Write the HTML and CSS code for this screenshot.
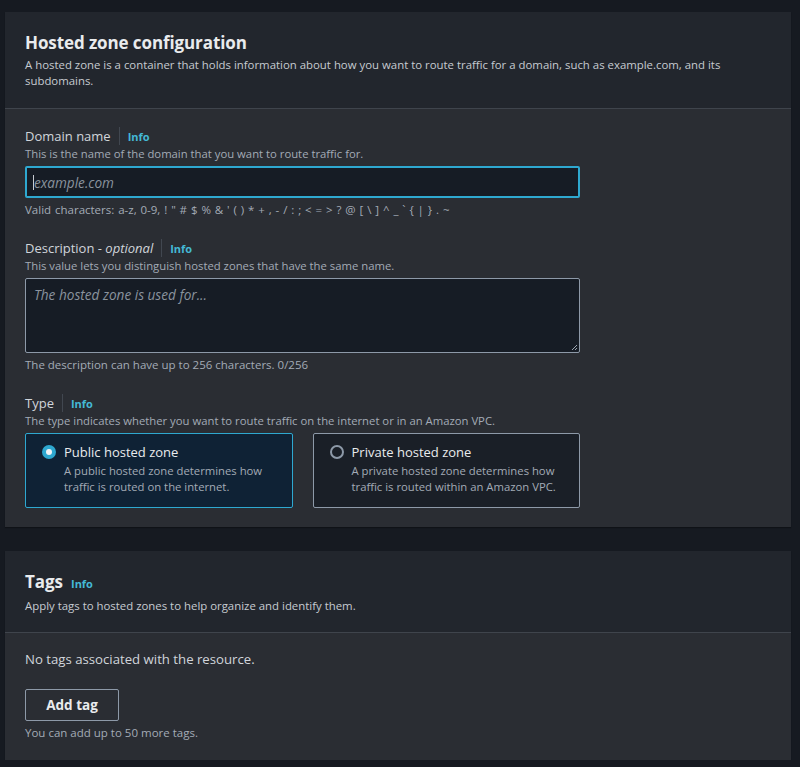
FILE: index.html
```html
<!DOCTYPE html>
<html>
<head>
<meta charset="utf-8">
<link rel="stylesheet" href="styles.css">
</head>
<body>
<div class="page">
  <section class="card">
    <header class="card-head">
      <h2 class="card-title">Hosted zone configuration</h2>
      <p class="card-desc">A hosted zone is a container that holds information about how you want to route traffic for a domain, such as example.com, and its subdomains.</p>
    </header>
    <div class="card-body">
      <div class="field">
        <div class="label-row"><span class="label">Domain name</span><span class="sep"></span><a class="info">Info</a></div>
        <div class="hint">This is the name of the domain that you want to route traffic for.</div>
        <div class="input focus"><span class="caret"></span><span class="ph">example.com</span></div>
        <div class="constraint wide">Valid characters: a-z, 0-9, ! " # $ % &amp; ' ( ) * + , - / : ; &lt; = &gt; ? @ [ \ ] ^ _ ` { | } . ~</div>
      </div>
      <div class="field">
        <div class="label-row"><span class="label">Description - <i>optional</i></span><span class="sep"></span><a class="info">Info</a></div>
        <div class="hint">This value lets you distinguish hosted zones that have the same name.</div>
        <div class="textarea"><span class="ph">The hosted zone is used for...</span>
          <svg class="grip" width="7" height="7" viewBox="0 0 7 7"><path d="M6 1L1 6M6 4L4 6" stroke="#9aa4b0" stroke-width="1"/></svg>
        </div>
        <div class="constraint">The description can have up to 256 characters. 0/256</div>
      </div>
      <div class="field">
        <div class="label-row"><span class="label">Type</span><span class="sep"></span><a class="info">Info</a></div>
        <div class="hint">The type indicates whether you want to route traffic on the internet or in an Amazon VPC.</div>
        <div class="tiles">
          <div class="tile selected">
            <span class="radio on"></span>
            <div class="tile-text">
              <div class="tile-title">Public hosted zone</div>
              <div class="tile-desc">A public hosted zone determines how traffic is routed on the internet.</div>
            </div>
          </div>
          <div class="tile">
            <span class="radio"></span>
            <div class="tile-text">
              <div class="tile-title">Private hosted zone</div>
              <div class="tile-desc">A private hosted zone determines how traffic is routed within an Amazon VPC.</div>
            </div>
          </div>
        </div>
      </div>
    </div>
  </section>

  <section class="card">
    <header class="card-head tags-head">
      <h2 class="card-title">Tags <a class="info info-head">Info</a></h2>
      <p class="card-desc">Apply tags to hosted zones to help organize and identify them.</p>
    </header>
    <div class="card-body tags-body">
      <p class="empty">No tags associated with the resource.</p>
      <button class="btn">Add tag</button>
      <div class="constraint">You can add up to 50 more tags.</div>
    </div>
  </section>
</div>
</body>
</html>
```

FILE: styles.css
```css
* { box-sizing: border-box; }
html, body { margin: 0; padding: 0; }
body {
  background: #161a21;
  font-family: "Open Sans", "Liberation Sans", sans-serif;
  color: #d1d5db;
}
.page {
  padding: 12px 9px 0 5px;
  display: flex;
  flex-direction: column;
  gap: 24px;
}
.card {
  background: #2a2d33;
  box-shadow: 0 1px 1px rgba(0,0,0,0.3);
}
.card-head {
  background: #22262d;
  padding: 20px 20px 19px;
  border-bottom: 1px solid #3f444c;
}
.tags-head { padding-bottom: 18px; }
.card-title {
  margin: 0;
  font-size: 17px;
  line-height: 22px;
  font-weight: 700;
  color: #e9ebed;
  letter-spacing: -0.1px;
}
.card-desc {
  margin: 3px 0 0;
  font-size: 11.4px;
  line-height: 16px;
  color: #c6cbd1;
}
.card-body {
  padding: 17px 20px 19px;
  display: flex;
  flex-direction: column;
  gap: 20px;
}
.field { width: 555px; }
.label-row {
  display: flex;
  align-items: center;
  height: 20px;
}
.label {
  font-size: 13px;
  color: #d1d5db;
}
.label i { font-style: italic; }
.sep {
  width: 1px;
  height: 18px;
  background: #414750;
  margin: 0 8px;
}
.info {
  font-size: 11px;
  font-weight: 700;
  color: #44b9d6;
}
.info-head { margin-left: 4px; }
.hint {
  font-size: 11.3px;
  line-height: 16px;
  color: #a3abb6;
}
.input {
  margin-top: 4px;
  height: 32px;
  background: #161c25;
  border: 2px solid #2ea8d0;
  border-radius: 2px;
  display: flex;
  align-items: center;
  padding: 0 6px;
}
.caret {
  width: 1px;
  height: 15px;
  background: #c6cbd1;
}
.ph {
  font-size: 13.6px;
  font-style: italic;
  color: #8a939e;
}
.constraint {
  margin-top: 4px;
  font-size: 11.5px;
  line-height: 16px;
  color: #a3abb6;
}
.constraint.wide { word-spacing: 0.9px; }
.textarea {
  position: relative;
  margin-top: 4px;
  height: 75px;
  background: #161c25;
  border: 1px solid #8d99a8;
  border-radius: 2px;
  padding: 4px 8px;
}
.grip { position: absolute; right: 1px; bottom: 1px; }
.tiles {
  margin-top: 4px;
  display: flex;
  gap: 20px;
}
.tile {
  flex: 1 1 0;
  min-width: 0;
  height: 75px;
  background: #1a1f27;
  border: 1px solid #8d99a8;
  border-radius: 2px;
  padding: 8px 16px;
  display: flex;
  gap: 8px;
}
.tile.selected {
  background: #0f2235;
  border-color: #2ea8d0;
}
.radio {
  flex: none;
  width: 14px;
  height: 14px;
  margin-top: 3px;
  border-radius: 50%;
  border: 2px solid #8d99a8;
  position: relative;
}
.radio.on {
  border: none;
  background: #2ea8d0;
}
.radio.on::after {
  content: "";
  position: absolute;
  left: 4px; top: 4px;
  width: 6px; height: 6px;
  border-radius: 50%;
  background: #f2f4f6;
}
.tile-title {
  font-size: 13px;
  line-height: 20px;
  color: #e9ebed;
}
.tile-desc {
  margin-top: 1px;
  font-size: 11.3px;
  line-height: 16px;
  color: #a3abb6;
}
.tags-body { gap: 0; padding-top: 16px; }
.empty {
  margin: 0;
  font-size: 13.2px;
  line-height: 20px;
  color: #d1d5db;
}
.btn {
  margin-top: 20px;
  align-self: flex-start;
  height: 32px;
  width: 94px;
  background: transparent;
  border: 1px solid #8d99a8;
  border-radius: 2px;
  color: #e9ebed;
  font-family: inherit;
  font-size: 13.5px;
  font-weight: 700;
}
```
